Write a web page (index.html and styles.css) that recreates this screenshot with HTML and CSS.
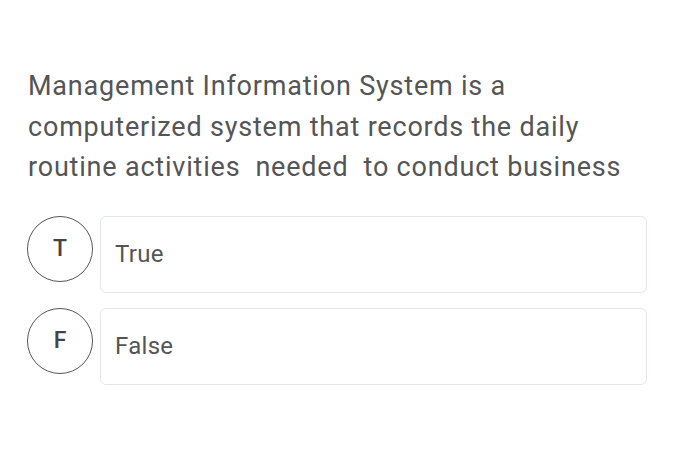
FILE: index.html
```html
<!DOCTYPE html>
<html>
<head>
<meta charset="utf-8">
<link rel="stylesheet" href="styles.css">
</head>
<body>
<div class="page">
  <p class="question">Management Information System is a computerized system that records the daily routine activities&nbsp; needed&nbsp; to conduct business</p>
  <div class="options">
    <div class="option">
      <div class="badge">T</div>
      <div class="answer">True</div>
    </div>
    <div class="option">
      <div class="badge">F</div>
      <div class="answer">False</div>
    </div>
  </div>
</div>
</body>
</html>
```
FILE: styles.css
```css
html, body {
  margin: 0;
  padding: 0;
  background: #fff;
}
.page {
  padding: 66px 0 0 27px;
  font-family: Roboto, "Liberation Sans", sans-serif;
  color: #555;
}
.question {
  margin: 0;
  width: 630px;
  font-size: 27px;
  letter-spacing: 0.8px;
  line-height: 40.5px;
  padding-left: 1px;
}
.options {
  margin-top: 28px;
  display: flex;
  flex-direction: column;
  gap: 15px;
}
.option {
  display: flex;
  align-items: flex-start;
  gap: 7px;
}
.badge {
  width: 64px;
  height: 64px;
  border: 1.5px solid #555;
  border-radius: 50%;
  display: flex;
  align-items: center;
  justify-content: center;
  font-size: 23px;
  font-weight: 500;
  color: #444;
}
.answer {
  border: 1px solid #e3e7ec;
  border-radius: 6px;
  display: flex;
  align-items: center;
  padding-left: 14px;
  box-sizing: border-box;
  width: 547px;
  height: 77px;
  font-size: 24px;
  letter-spacing: 0.3px;
  color: #555;
}
```
